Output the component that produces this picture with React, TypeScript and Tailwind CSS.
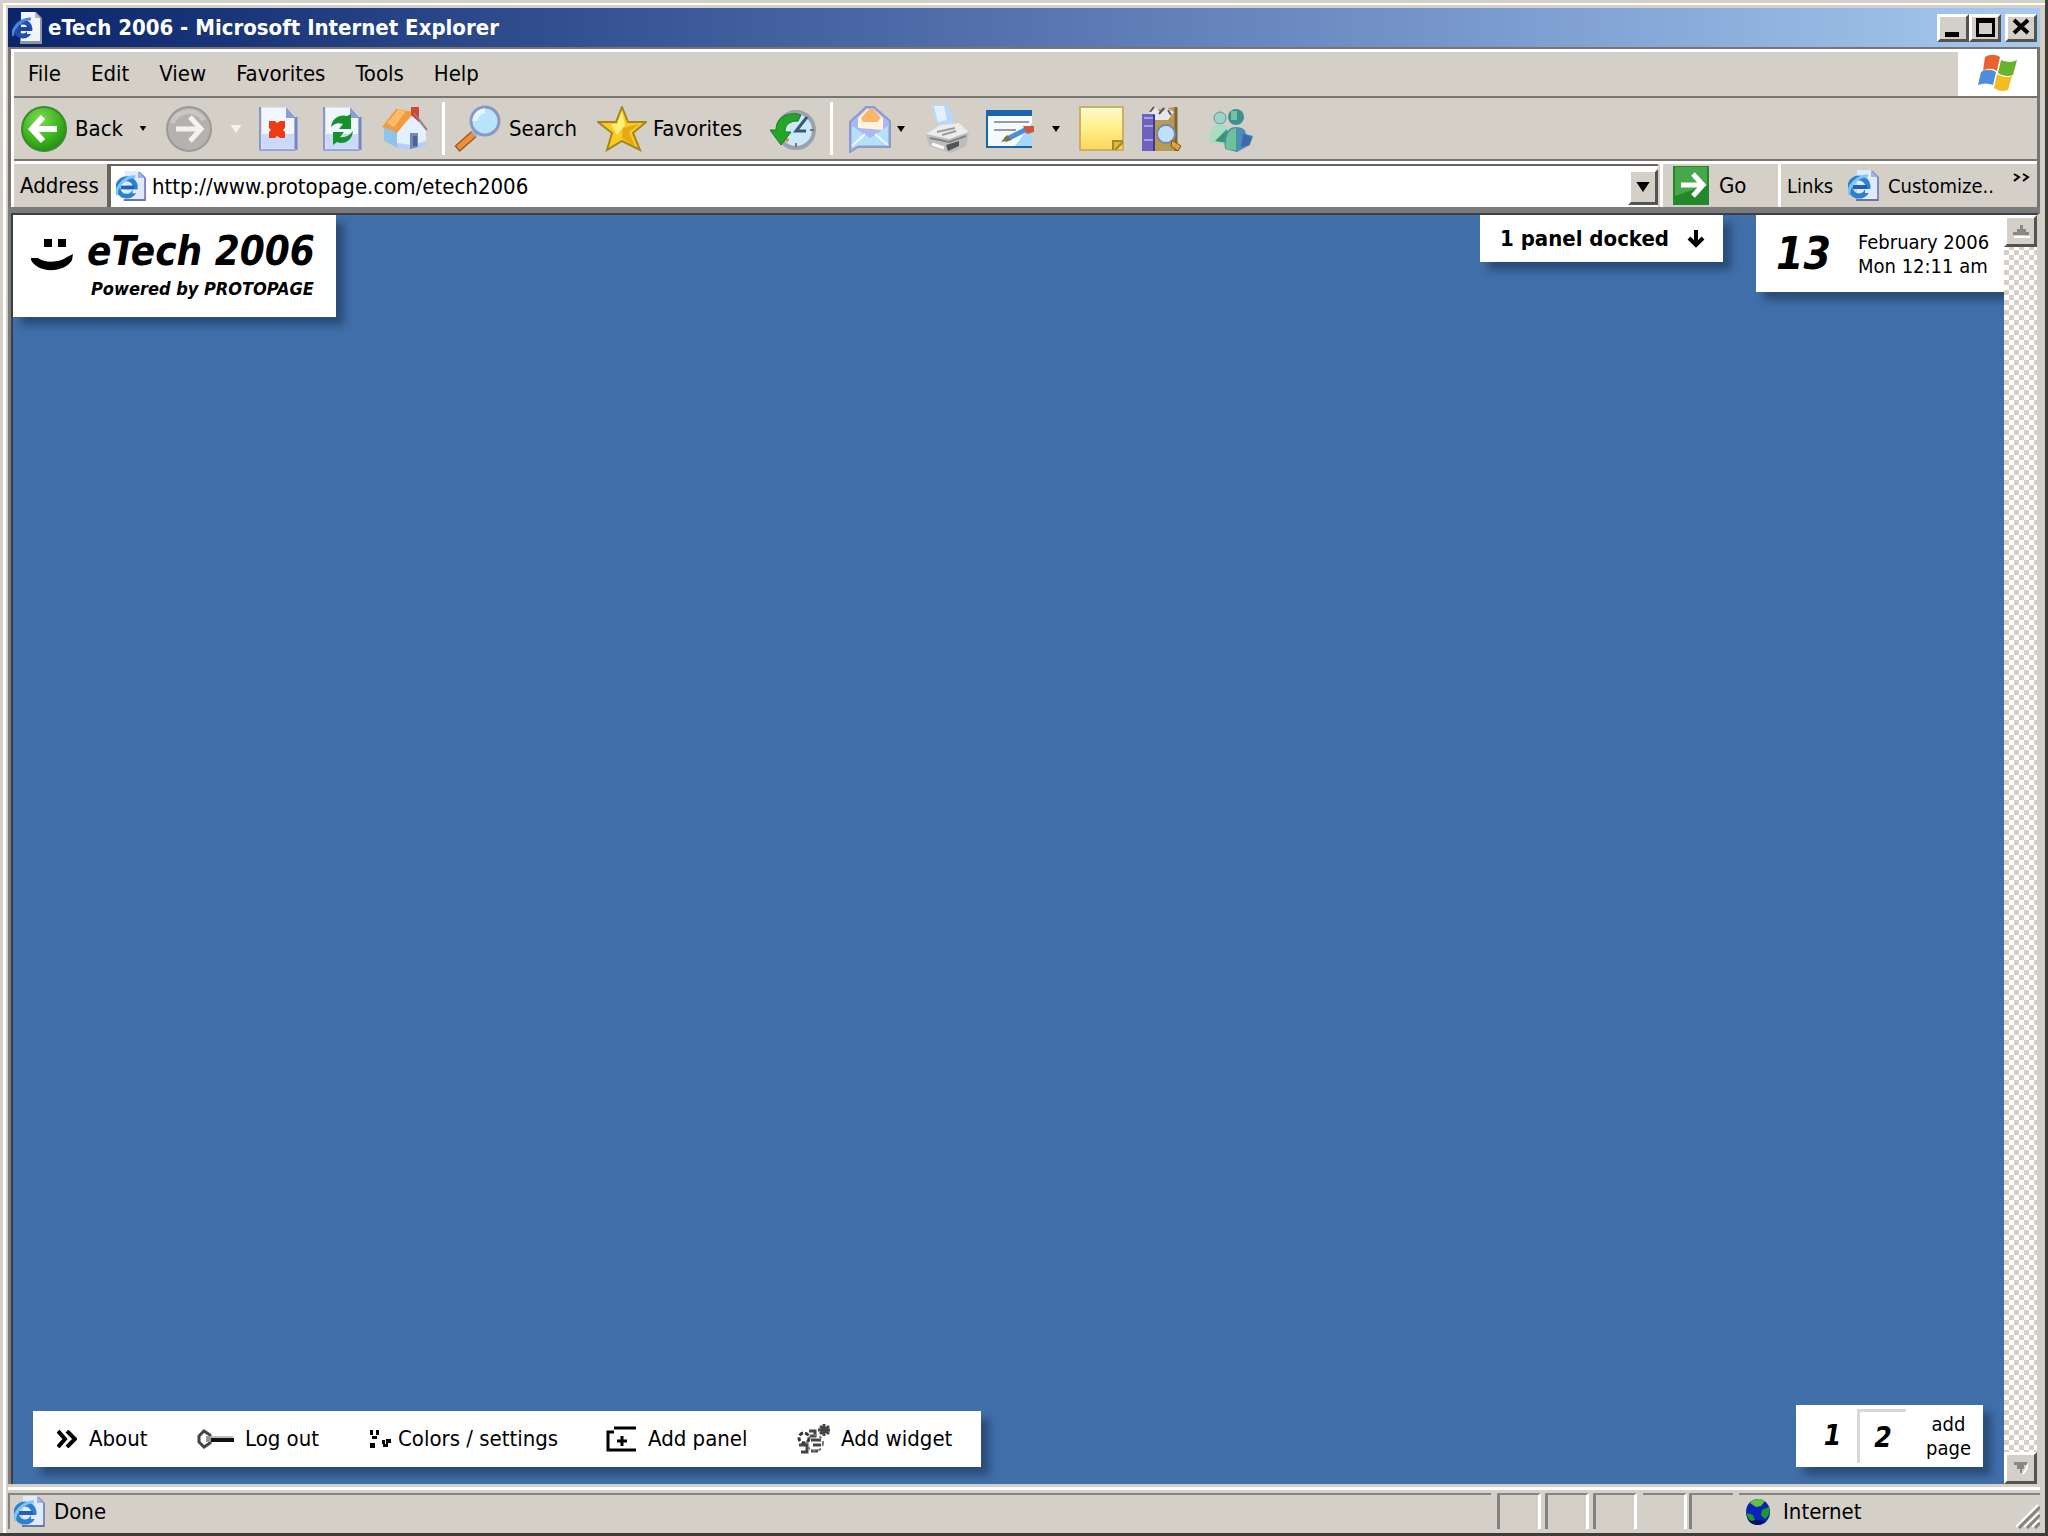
import React from "react";

const ui = "font-['DejaVu_Sans_Condensed','DejaVu_Sans',sans-serif]";

function PageIcon({ className }: { className: string }) {
  return (
    <svg viewBox="0 0 32 32" className={className} aria-hidden="true">
      <path d="M10 1h15l6 6v24H9z" fill="#7f8bb8" />
      <path d="M9 0h14v7h6v22H9z" fill="#dfeaff" />
      <path d="M23 0l6 7h-6z" fill="#9fb4e6" />
      <path d="M8 29h22v2H8z" fill="#6a76a6" />
      <circle cx="11" cy="17" r="9" fill="none" stroke="#2f7fd0" strokeWidth="5" />
      <path d="M5 17h14" stroke="#1d62b8" strokeWidth="4" />
      <path d="M1 25C-1 17 10 5 20 6" fill="none" stroke="#7cc7f4" strokeWidth="3" />
      <path d="M17 19h6v4h-6z" fill="#dfeaff" />
    </svg>
  );
}

function TitleIcon() {
  return (
    <svg viewBox="0 0 32 32" className="size-8" aria-hidden="true">
      <path d="M9 0h15l6 6v26H8z" fill="#8d96a8" />
      <path d="M9 0h14v6h5v23H9z" fill="#f1f5fa" />
      <path d="M23 0l5 6h-5z" fill="#b3bccc" />
      <circle cx="11" cy="17" r="7" fill="none" stroke="#1f4fae" strokeWidth="5" />
      <path d="M6 17h12" stroke="#1b459e" strokeWidth="4" />
      <path d="M1 24C-1 17 10 6 19 7" fill="none" stroke="#4f86d8" strokeWidth="3" />
      <path d="M15 19h6v3h-6z" fill="#f1f5fa" />
    </svg>
  );
}

function BackIcon() {
  return (
    <svg viewBox="0 0 46 46" className="size-[46px]" aria-hidden="true">
      <defs>
        <radialGradient id="gb" cx="40%" cy="30%" r="75%">
          <stop offset="0" stopColor="#7fdc55" />
          <stop offset=".6" stopColor="#3eb51f" />
          <stop offset="1" stopColor="#1f8a12" />
        </radialGradient>
      </defs>
      <circle cx="23" cy="23" r="22" fill="url(#gb)" stroke="#3c8a2c" strokeWidth="2" />
      <path d="M22 11L11 23l11 12M12 23h24" fill="none" stroke="#fff" strokeWidth="6" />
    </svg>
  );
}

function ForwardIcon() {
  return (
    <svg viewBox="0 0 46 46" className="size-[46px]" aria-hidden="true">
      <circle cx="23" cy="23" r="22" fill="#b4b2ae" stroke="#9c9a96" strokeWidth="2" />
      <path d="M6 17a18 18 0 0 1 32-3" fill="none" stroke="#c9c7c3" strokeWidth="5" />
      <path d="M24 11l11 12-11 12M34 23H10" fill="none" stroke="#f4f2ee" strokeWidth="5" />
    </svg>
  );
}

function SheetBase() {
  return (
    <>
      <path d="M1 1h28l9 10v33H1z" fill="#d5e0fb" />
      <path d="M4 2h24v10h8v29H4z" fill="#f1f6ff" />
      <path d="M4 28h32v14H4z" fill="#c9d8fb" />
      <path d="M28 1l10 11H28z" fill="#8d9dd0" />
      <path d="M2 1v43" stroke="#8b97bd" strokeWidth="2" />
      <path d="M38 11v33" stroke="#7484be" strokeWidth="3" />
      <path d="M1 44h37" stroke="#94a6dd" strokeWidth="2" />
    </>
  );
}

function StopIcon() {
  return (
    <svg viewBox="0 0 40 46" className="h-[46px] w-10" aria-hidden="true">
      <SheetBase />
      <path d="M11 15h6l2 2 3-2h5v7l-2 2 2 2v6h-5l-3-2-2 2h-6v-6l2-2-2-2z" fill="#ee3b12" />
    </svg>
  );
}

function RefreshIcon() {
  return (
    <svg viewBox="0 0 40 46" className="h-[46px] w-10" aria-hidden="true">
      <SheetBase />
      <path d="M9 21c1-9 9-13 16-11l4-2v15H17l4-5c-5-2-9 0-12 3z" fill="#14932a" />
      <path d="M31 25c-1 10-9 14-16 11l-4 3V26h11l-4 5c5 1 9-1 13-6z" fill="#14932a" />
    </svg>
  );
}

function HomeIcon() {
  return (
    <svg viewBox="0 0 46 46" className="size-[46px]" aria-hidden="true">
      <path d="M2 20l16 3v20L2 35z" fill="#8ec4e8" />
      <path d="M15 24L31 10l13 15v16l-20 4-9-4z" fill="#e4efff" />
      <path d="M30 39l14-4v6l-20 4-9-4v-4z" fill="#b9cdf2" />
      <path d="M0 21L14 3l18 3-17 21-5-3z" fill="#f39a3d" />
      <path d="M5 17L16 4l8 1-12 16z" fill="#ffbd6b" />
      <path d="M29 1h8v15l-8-7z" fill="#d0472c" />
      <path d="M32 7l13 17" stroke="#8e7d8a" strokeWidth="2" />
      <path d="M28 27h8v14l-8 2z" fill="#7287b4" />
      <path d="M31 30h4v10h-4z" fill="#4e6292" />
    </svg>
  );
}

function SearchIcon() {
  return (
    <svg viewBox="0 0 48 48" className="size-12" aria-hidden="true">
      <path d="M21 29L4 44" stroke="#9c5a2c" strokeWidth="8" />
      <path d="M20 30L5 43" stroke="#f08f35" strokeWidth="5" />
      <path d="M24 26l-4 4" stroke="#b0acc0" strokeWidth="6" />
      <circle cx="32" cy="16" r="14" fill="#b7e4fb" stroke="#8a98c4" strokeWidth="3" />
      <path d="M22 16a10 10 0 0 1 10-10" fill="none" stroke="#e9f8ff" strokeWidth="5" />
    </svg>
  );
}

function StarIcon() {
  return (
    <svg viewBox="0 0 50 46" className="h-[46px] w-[50px]" aria-hidden="true">
      <path d="M25 1l6 15h18L36 27l7 17-18-9-15 9 5-17L1 16h18z" fill="#f8cb25" stroke="#a8851c" strokeWidth="2" />
      <path d="M25 5l3 14-8 10-6-11h6z" fill="#fff07a" />
      <path d="M26 22l16-4-10 8 6 14-13-8z" fill="#e6a812" />
    </svg>
  );
}

function HistoryIcon() {
  return (
    <svg viewBox="0 0 46 46" className="size-[46px]" aria-hidden="true">
      <circle cx="26" cy="24" r="18" fill="#cde8f8" stroke="#9aa3ad" strokeWidth="4" />
      <path d="M26 7v4M26 37v4M40 24h4" stroke="#6b7785" strokeWidth="2" />
      <path d="M37 11L26 25h10" fill="none" stroke="#3a5878" strokeWidth="3" />
      <circle cx="17" cy="34" r="2" fill="#e38a45" />
      <path d="M31 9C18 5 6 11 6 24H0l11 15 10-13h-6c0-7 4-11 13-11z" fill="#26a52a" stroke="#16801c" strokeWidth="1" />
    </svg>
  );
}

function MailIcon() {
  return (
    <svg viewBox="0 0 42 48" className="h-12 w-[42px]" aria-hidden="true">
      <path d="M1 17L17 2h8l16 14v26H9l-8 5z" fill="#a9b9ee" stroke="#8b9acb" strokeWidth="2" />
      <path d="M9 23V13l9-9h6l10 9v12z" fill="#fff2df" />
      <path d="M12 13l8-9h4l8 9-4 4H14z" fill="#f8b668" />
      <path d="M3 21l18 12 18-12v19H9l-6 3z" fill="#b5e0fa" />
      <path d="M3 41l13-12M39 40L26 29" stroke="#eefaff" strokeWidth="2" />
    </svg>
  );
}

function PrinterIcon() {
  return (
    <svg viewBox="0 0 46 48" className="h-12 w-[46px]" aria-hidden="true">
      <path d="M7 0h18l5 18-16 4z" fill="#b5d8fb" />
      <path d="M10 1h10l3 14-9 2z" fill="#e3f1ff" />
      <path d="M2 29l14-9 19-2 10 9-3 14-15 7L5 41z" fill="#bdbdbd" />
      <path d="M2 29l14-9 19-2 10 9-20 7z" fill="#ececec" />
      <path d="M13 27l18-4M18 30l14-4" stroke="#9c9c9c" strokeWidth="2" />
      <path d="M6 33l19 4 17-6" fill="none" stroke="#828282" strokeWidth="2" />
      <path d="M22 40l13-4v5l-11 5z" fill="#555" />
      <path d="M8 39l12 4" stroke="#f7f7f7" strokeWidth="3" />
    </svg>
  );
}

function EditIcon() {
  return (
    <svg viewBox="0 0 50 40" className="h-10 w-[50px]" aria-hidden="true">
      <path d="M1 1h46v38H1z" fill="#1766ae" />
      <path d="M3 7h44v30H3z" fill="#f5faff" />
      <path d="M30 37L47 14v23z" fill="#a8d5fa" />
      <path d="M9 13h35M9 21h22" stroke="#9a9aa2" strokeWidth="2" />
      <path d="M20 31L42 20" stroke="#4b8edb" strokeWidth="5" />
      <path d="M16 33l6-7 5 5z" fill="#86703c" />
      <path d="M38 17h11v6l-7 2z" fill="#cf573a" />
    </svg>
  );
}

function NoteIcon() {
  return (
    <svg viewBox="0 0 46 46" className="size-[46px]" aria-hidden="true">
      <defs>
        <linearGradient id="gn" x1="0" y1="0" x2="0" y2="1">
          <stop offset="0" stopColor="#fffbcf" />
          <stop offset=".5" stopColor="#ffee89" />
          <stop offset="1" stopColor="#fcd75a" />
        </linearGradient>
      </defs>
      <path d="M1 1h43v43H1z" fill="url(#gn)" stroke="#cdb063" strokeWidth="2" />
      <path d="M34 45V35h10v3l-7 7z" fill="#ddb93c" />
      <path d="M34 44V35h10M36 44l8-8" fill="none" stroke="#a78727" strokeWidth="2" />
    </svg>
  );
}

function ResearchIcon() {
  return (
    <svg viewBox="0 0 42 46" className="h-[46px] w-[42px]" aria-hidden="true">
      <path d="M14 4l20-3 2 44H14z" fill="#b89a54" />
      <path d="M8 6l6-5 6 6 6-5 7 4-6 8H10z" fill="#e9e7ee" />
      <path d="M9 6l4-5M18 8l5-6M27 4l3 5" stroke="#57576a" strokeWidth="2" />
      <path d="M1 8h13v37H1z" fill="#6d62bd" />
      <path d="M3 12h9M3 20h9M3 34h9" stroke="#a99fe6" strokeWidth="2" />
      <path d="M13 9v36" stroke="#413a85" strokeWidth="2" />
      <path d="M35 1v44" stroke="#7d6534" strokeWidth="3" />
      <circle cx="25" cy="28" r="9" fill="#c0e0f6" stroke="#7188b1" strokeWidth="2" />
      <path d="M31 34l9 6-3 5-7-5z" fill="#e0a23c" stroke="#7b5418" strokeWidth="1" />
    </svg>
  );
}

function MessengerIcon() {
  return (
    <svg viewBox="0 0 48 46" className="h-[46px] w-12" aria-hidden="true">
      <circle cx="13" cy="12" r="6" fill="#9fd3c5" stroke="#5d8f9a" strokeWidth="1" />
      <path d="M3 37c-3-11 3-19 11-19 7 0 9 8 7 20z" fill="#a9dcc0" />
      <path d="M8 35l12-12v14z" fill="#3b9477" />
      <circle cx="29" cy="11" r="8" fill="#3f8f8c" />
      <path d="M24 5h6v9h-6z" fill="#76c0a8" />
      <path d="M18 43c-2-14 2-22 11-22 8 0 10 4 10 7l7 2-3 9-13 7z" fill="#4b8fb4" />
      <path d="M19 43c-1-12 2-20 10-21v22z" fill="#6fc295" />
      <path d="M36 28l9 3-3 8-8 2z" fill="#3e69ad" />
    </svg>
  );
}

function WindowsFlag() {
  return (
    <svg viewBox="0 0 40 38" className="h-[38px] w-10" aria-hidden="true">
      <path d="M7 3c5-3 10-3 15 0l-3 14c-5-3-10-3-14 0z" fill="#ea6230" />
      <path d="M23 6c5 2 10 3 16 0l-4 15c-5 2-10 1-15-2z" fill="#68b32e" />
      <path d="M3 18c5-3 10-3 15 0l-3 13c-5-2-10-2-15 0z" fill="#4c8edb" />
      <path d="M19 20c5 3 10 4 15 2l-4 14c-5 2-10 1-14-2z" fill="#f3bd22" />
    </svg>
  );
}

function Globe() {
  return (
    <svg viewBox="0 0 26 28" className="h-7 w-[26px]" aria-hidden="true">
      <ellipse cx="13" cy="14" rx="12" ry="13" fill="#0b22b8" />
      <path d="M13 27C6 27 3 23 2 19l8 3 10 1c-1 2-4 4-7 4z" fill="#04145f" />
      <path d="M5 5c3-5 12-5 15-2l-4 5-5 1-3-2z" fill="#5fc23d" />
      <path d="M2 15l6 2 2 5-3 1c-4-1-5-5-5-8zM17 12l7-3c1 6 0 9-4 12l-4-4z" fill="#1e9a2c" />
    </svg>
  );
}

function Caret({ className }: { className: string }) {
  return (
    <svg viewBox="0 0 8 6" className={className} aria-hidden="true">
      <path d="M0 0h8L4 6z" fill="currentColor" />
    </svg>
  );
}

const bevel =
  "flex shrink-0 items-center justify-center border-3 border-t-white border-l-white border-r-[#55534f] border-b-[#55534f] bg-[#d4d0c8]";

const shadow = "shadow-[8px_8px_8px_rgba(20,40,70,0.5)]";

function TitleBar() {
  return (
    <header className="flex h-[39px] items-center bg-linear-to-r from-[#0a246a] via-[#5a77b3] via-52% to-[#a6caf0] pr-[3px] pl-1">
      <TitleIcon />
      <h1 className="flex-1 pl-1 text-[22px] leading-6 font-bold whitespace-nowrap text-white">
        eTech 2006 - Microsoft Internet Explorer
      </h1>
      <button aria-label="Minimize" className={`${bevel} h-7 w-8`}>
        <svg viewBox="0 0 26 22" className="h-[22px] w-[26px]">
          <path d="M5 15h14v5H5z" />
        </svg>
      </button>
      <button aria-label="Maximize" className={`${bevel} h-7 w-8`}>
        <svg viewBox="0 0 26 22" className="h-[22px] w-[26px]">
          <path d="M4 1h19v19H4zM7 6v11h13V6z" fillRule="evenodd" />
        </svg>
      </button>
      <button aria-label="Close" className={`${bevel} ml-1 h-7 w-8`}>
        <svg viewBox="0 0 26 22" className="h-[22px] w-[26px]">
          <path d="M6 3l14 13M20 3L6 16" stroke="#000" strokeWidth="4" />
        </svg>
      </button>
    </header>
  );
}

function MenuBar() {
  return (
    <div className="flex h-[49px] border-b-2 border-[#77756f]">
      <nav className="flex flex-1 items-center gap-[30px] border-t-3 border-white pl-3.5 text-[22px] leading-6">
        <button>File</button>
        <button>Edit</button>
        <button>View</button>
        <button>Favorites</button>
        <button>Tools</button>
        <button>Help</button>
      </nav>
      <div className="flex w-[79px] items-center justify-center bg-white">
        <WindowsFlag />
      </div>
    </div>
  );
}

function Toolbar() {
  return (
    <div className="flex h-[63px] items-center border-b-2 border-[#77756f] pl-[7px] text-[22px] leading-6">
      <button className="flex w-[118px] items-center gap-2">
        <BackIcon />
        <span>Back</span>
      </button>
      <Caret className="mr-[19px] h-[5px] w-2" />
      <button aria-label="Forward" className="w-[64px]">
        <ForwardIcon />
      </button>
      <Caret className="mr-4 h-2 w-3 text-[#f5f3ef]" />
      <button aria-label="Stop" className="w-16">
        <StopIcon />
      </button>
      <button aria-label="Refresh" className="w-[60px]">
        <RefreshIcon />
      </button>
      <button aria-label="Home" className="w-[60px]">
        <HomeIcon />
      </button>
      <div className="mr-2 h-[53px] w-[3px] bg-white" />
      <button className="flex w-[144px] items-center gap-2">
        <SearchIcon />
        <span>Search</span>
      </button>
      <button className="flex w-[173px] items-center gap-1.5">
        <StarIcon />
        <span>Favorites</span>
      </button>
      <button aria-label="History" className="w-[60px]">
        <HistoryIcon />
      </button>
      <div className="mr-4 h-[53px] w-[3px] bg-white" />
      <button aria-label="Mail" className="w-12">
        <MailIcon />
      </button>
      <Caret className="mr-[19px] h-1.5 w-2" />
      <button aria-label="Print" className="w-[61px]">
        <PrinterIcon />
      </button>
      <button aria-label="Edit page" className="w-[67px]">
        <EditIcon />
      </button>
      <Caret className="mr-[19px] h-1.5 w-2" />
      <button aria-label="Discuss" className="w-[62px]">
        <NoteIcon />
      </button>
      <button aria-label="Research" className="w-[66px]">
        <ResearchIcon />
      </button>
      <button aria-label="Messenger">
        <MessengerIcon />
      </button>
    </div>
  );
}

function AddressBar() {
  return (
    <div className="flex h-[46px] items-stretch border-t-3 border-white text-[22px] leading-6">
      <label htmlFor="url" className="flex w-[93px] items-center pl-1.5">
        Address
      </label>
      <div className="flex flex-1 items-center border-t-2 border-l-4 border-[#66645f] bg-white pl-[5px]">
        <PageIcon className="size-[31px]" />
        <input
          id="url"
          defaultValue="http://www.protopage.com/etech2006"
          className="min-w-0 flex-1 bg-transparent pl-[5px] outline-none"
        />
        <button aria-label="Show addresses" className={`${bevel} h-9 w-[30px]`}>
          <Caret className="h-2.5 w-3.5" />
        </button>
      </div>
      <div className="ml-0.5 w-[3px] bg-white" />
      <button className="flex w-[115px] items-center gap-2.5 pl-2.5">
        <svg viewBox="0 0 36 39" className="h-[39px] w-9" aria-hidden="true">
          <path d="M0 0h36v39H0z" fill="#23882c" />
          <path d="M2 1h32v18L2 30z" fill="#46a84b" />
          <path d="M20 8l10 11-10 11M8 19h20" fill="none" stroke="#fff" strokeWidth="5" />
        </svg>
        <span>Go</span>
      </button>
      <div className="w-[3px] bg-white" />
      <div className="flex w-[256px] items-center pl-1.5 text-[20px]">
        <span className="w-[61px]">Links</span>
        <a href="#customize" className="flex flex-1 items-center gap-2">
          <PageIcon className="size-8" />
          <span>Customize..</span>
        </a>
        <button aria-label="More links" className="mr-1.5 mb-4">
          <svg viewBox="0 0 18 9" className="h-[9px] w-[18px]">
            <path d="M1 1l5 3-5 4M10 1l5 3-5 4" fill="none" stroke="#000" strokeWidth="2" />
          </svg>
        </button>
      </div>
    </div>
  );
}

function Smile() {
  return (
    <svg viewBox="0 0 44 32" className="h-8 w-11" aria-hidden="true">
      <path d="M13 0h8v8h-8zM27 0h8v8h-8z" />
      <path d="M0 19h7c6 5 22 5 29-1l6-3-1 6c-6 12-33 15-41 0z" />
    </svg>
  );
}

function Desktop() {
  return (
    <main className="flex flex-1 flex-col justify-between overflow-hidden bg-[#406faa]">
      <div className="flex items-start">
        <section className={`flex h-[102px] w-[323px] gap-3 bg-white pt-4 pl-[18px] ${shadow}`}>
          <div className="pt-2">
            <Smile />
          </div>
          <div className="font-bold whitespace-nowrap italic">
            <h2 className="text-[40px] leading-10">eTech 2006</h2>
            <p className="pt-1.5 pl-1 text-[18px] leading-6">Powered by PROTOPAGE</p>
          </div>
        </section>
        <div className="flex-1" />
        <button
          className={`mr-[33px] flex h-[47px] w-[243px] items-center justify-between bg-white pr-[18px] pl-5 text-[22px] leading-6 font-bold whitespace-nowrap ${shadow}`}
        >
          1 panel docked
          <svg viewBox="0 0 18 18" className="size-[18px]" aria-hidden="true">
            <path d="M9 0v14M2 8l7 7 7-7" fill="none" stroke="#000" strokeWidth="4" />
          </svg>
        </button>
        <section className={`flex h-[77px] w-[248px] items-center bg-white pl-5 ${shadow}`}>
          <span className="w-[82px] text-[44px] leading-[48px] font-bold italic">13</span>
          <p className="text-[20px] leading-6 whitespace-nowrap">
            February 2006
            <br />
            Mon 12:11 am
          </p>
        </section>
      </div>
      <div className="flex items-end justify-between pr-[21px] pb-[17px] pl-5">
        <nav
          className={`flex h-14 w-[948px] items-center bg-white pl-6 text-[22px] leading-6 whitespace-nowrap ${shadow}`}
        >
          <button className="flex w-[140px] items-center gap-3">
            <svg viewBox="0 0 20 18" className="h-[18px] w-5" aria-hidden="true">
              <path d="M1 1l7 8-7 8M10 1l8 8-8 8" fill="none" stroke="#000" strokeWidth="4" />
            </svg>
            About
          </button>
          <button className="flex w-[171px] items-center gap-2.5">
            <svg viewBox="0 0 38 20" className="h-5 w-[38px]" aria-hidden="true">
              <path d="M7 2l6 4v8l-6 4-5-5V7z" fill="none" stroke="#444" strokeWidth="3" />
              <path d="M9 7h6v6H9z" fill="#999" />
              <path d="M14 11h23" stroke="#111" strokeWidth="4" />
              <path d="M14 8h22" stroke="#bbb" strokeWidth="2" />
            </svg>
            Log out
          </button>
          <button className="flex w-[238px] items-center gap-1.5">
            <svg viewBox="0 0 24 20" className="h-5 w-6" aria-hidden="true">
              <path d="M2 1h3v5H2zM8 1h3v5H8zM4 7h5v3H4zM2 14h5v5H2zM14 11h3v4h-3zM18 10h5v4h-3v4h-5v-3h3z" />
            </svg>
            Colors / settings
          </button>
          <button className="flex w-[191px] items-center gap-3">
            <svg viewBox="0 0 30 26" className="h-[26px] w-[30px]" aria-hidden="true">
              <path d="M30 2H8M8 6H2v18h28M16 10v10M11 15h10" fill="none" stroke="#000" strokeWidth="3" />
            </svg>
            Add panel
          </button>
          <button className="flex items-center gap-2.5">
            <svg viewBox="0 0 34 32" className="h-8 w-[34px]" aria-hidden="true">
              <circle cx="7" cy="15" r="5" fill="none" stroke="#333" strokeWidth="3" strokeDasharray="4 2" />
              <path d="M2 22h8v7H4M12 8h6v5h-5M14 17h10M16 22h8M14 28h7" fill="none" stroke="#444" strokeWidth="3" />
              <path d="M27 1v12M21 7h12M23 3l9 8M32 3l-9 8" stroke="#444" strokeWidth="3" />
              <circle cx="18" cy="20" r="8" fill="none" stroke="#777" strokeWidth="2" strokeDasharray="3 3" />
            </svg>
            Add widget
          </button>
        </nav>
        <nav className={`flex h-[62px] w-[187px] items-center bg-white ${shadow}`}>
          <button className="w-[61px] pl-3 text-center text-[28px] leading-8 font-bold italic">1</button>
          <button className="h-[54px] w-[49px] border-t-3 border-l-3 border-[#d8d8d8] text-center text-[28px] leading-8 font-bold italic">
            2
          </button>
          <button className="flex-1 pl-2 text-center text-[20px] leading-6">
            add
            <br />
            page
          </button>
        </nav>
      </div>
    </main>
  );
}

function ScrollBar() {
  return (
    <div className="flex w-[33px] flex-col justify-between bg-[repeating-conic-gradient(#d4d0c8_0_25%,#ffffff_0_50%)] bg-size-[10px_10px]">
      <button aria-label="Scroll up" className={`${bevel} h-8 w-full`}>
        <svg viewBox="0 0 18 14" className="h-3.5 w-[18px]">
          <path d="M2 12h16v2H2z" fill="#fff" />
          <path d="M8 1h3v4h3v3h3v3H1V8h4V5h3z" fill="#8a8882" />
        </svg>
      </button>
      <button aria-label="Scroll down" className={`${bevel} h-8 w-full`}>
        <svg viewBox="0 0 16 14" className="h-3.5 w-4">
          <path d="M14 3v4l-4 6" fill="none" stroke="#fff" strokeWidth="2" />
          <path d="M1 1h13v3h-3v4H9v4H7V8H4V4H1z" fill="#8a8882" />
        </svg>
      </button>
    </div>
  );
}

function StatusBar() {
  return (
    <footer className="flex h-[40px] items-stretch pb-1 text-[22px] leading-6">
      <div className="flex flex-1 items-center gap-2 border-t-2 border-l-2 border-[#85837d] pl-1">
        <PageIcon className="size-8" />
        Done
      </div>
      <div className="mr-1 ml-1.5 w-11 border-t-2 border-r-3 border-l-3 border-t-[#85837d] border-r-white border-l-[#85837d]" />
      <div className="mr-1 w-11 border-t-2 border-r-3 border-l-3 border-t-[#85837d] border-r-white border-l-[#85837d]" />
      <div className="mr-1.5 w-11 border-t-2 border-r-3 border-l-3 border-t-[#85837d] border-r-white border-l-[#85837d]" />
      <div className="mr-0.5 w-11 border-t-2 border-r-3 border-t-[#85837d] border-r-white" />
      <div className="mr-1.5 w-11 border-t-2 border-l-3 border-[#85837d]" />
      <div className="flex w-[301px] items-center gap-3 border-t-2 border-[#85837d] pl-1.5">
        <Globe />
        <span className="flex-1">Internet</span>
        <svg viewBox="0 0 24 26" className="h-[26px] w-6 self-end" aria-hidden="true">
          <path d="M0 24L22 2M8 24L23 10M16 24l7-7" stroke="#fff" strokeWidth="2" />
          <path d="M3 25L24 4M11 25l13-13M19 25l5-5" stroke="#85837d" strokeWidth="3" />
        </svg>
      </div>
    </footer>
  );
}

export default function App() {
  return (
    <div
      className={`flex min-h-screen flex-col border-r-3 border-b-3 border-[#403c39] bg-[#d4d0c8] pt-[3px] pl-[3px] text-black ${ui}`}
    >
      <div className="flex flex-1 flex-col border-t-2 border-l-3 border-white pt-[3px] pr-[5px] pl-0.5">
        <TitleBar />
        <div className="border-t-2 border-r-3 border-l-3 border-[#77756f]">
          <div className="border-l-3 border-white">
            <MenuBar />
            <Toolbar />
            <AddressBar />
          </div>
        </div>
        <div className="flex flex-1 flex-col border-t-6 border-l-3 border-[#7b7b7b]">
          <div className="flex flex-1 border-t-2 border-r-3 border-l-2 border-t-[#3a4048] border-r-[#d4d0c8] border-l-[#3a4048]">
            <Desktop />
            <ScrollBar />
          </div>
        </div>
        <div className="mb-[3px] h-[6px] border-t-3 border-[#d4d0c8] bg-white" />
        <StatusBar />
      </div>
    </div>
  );
}
